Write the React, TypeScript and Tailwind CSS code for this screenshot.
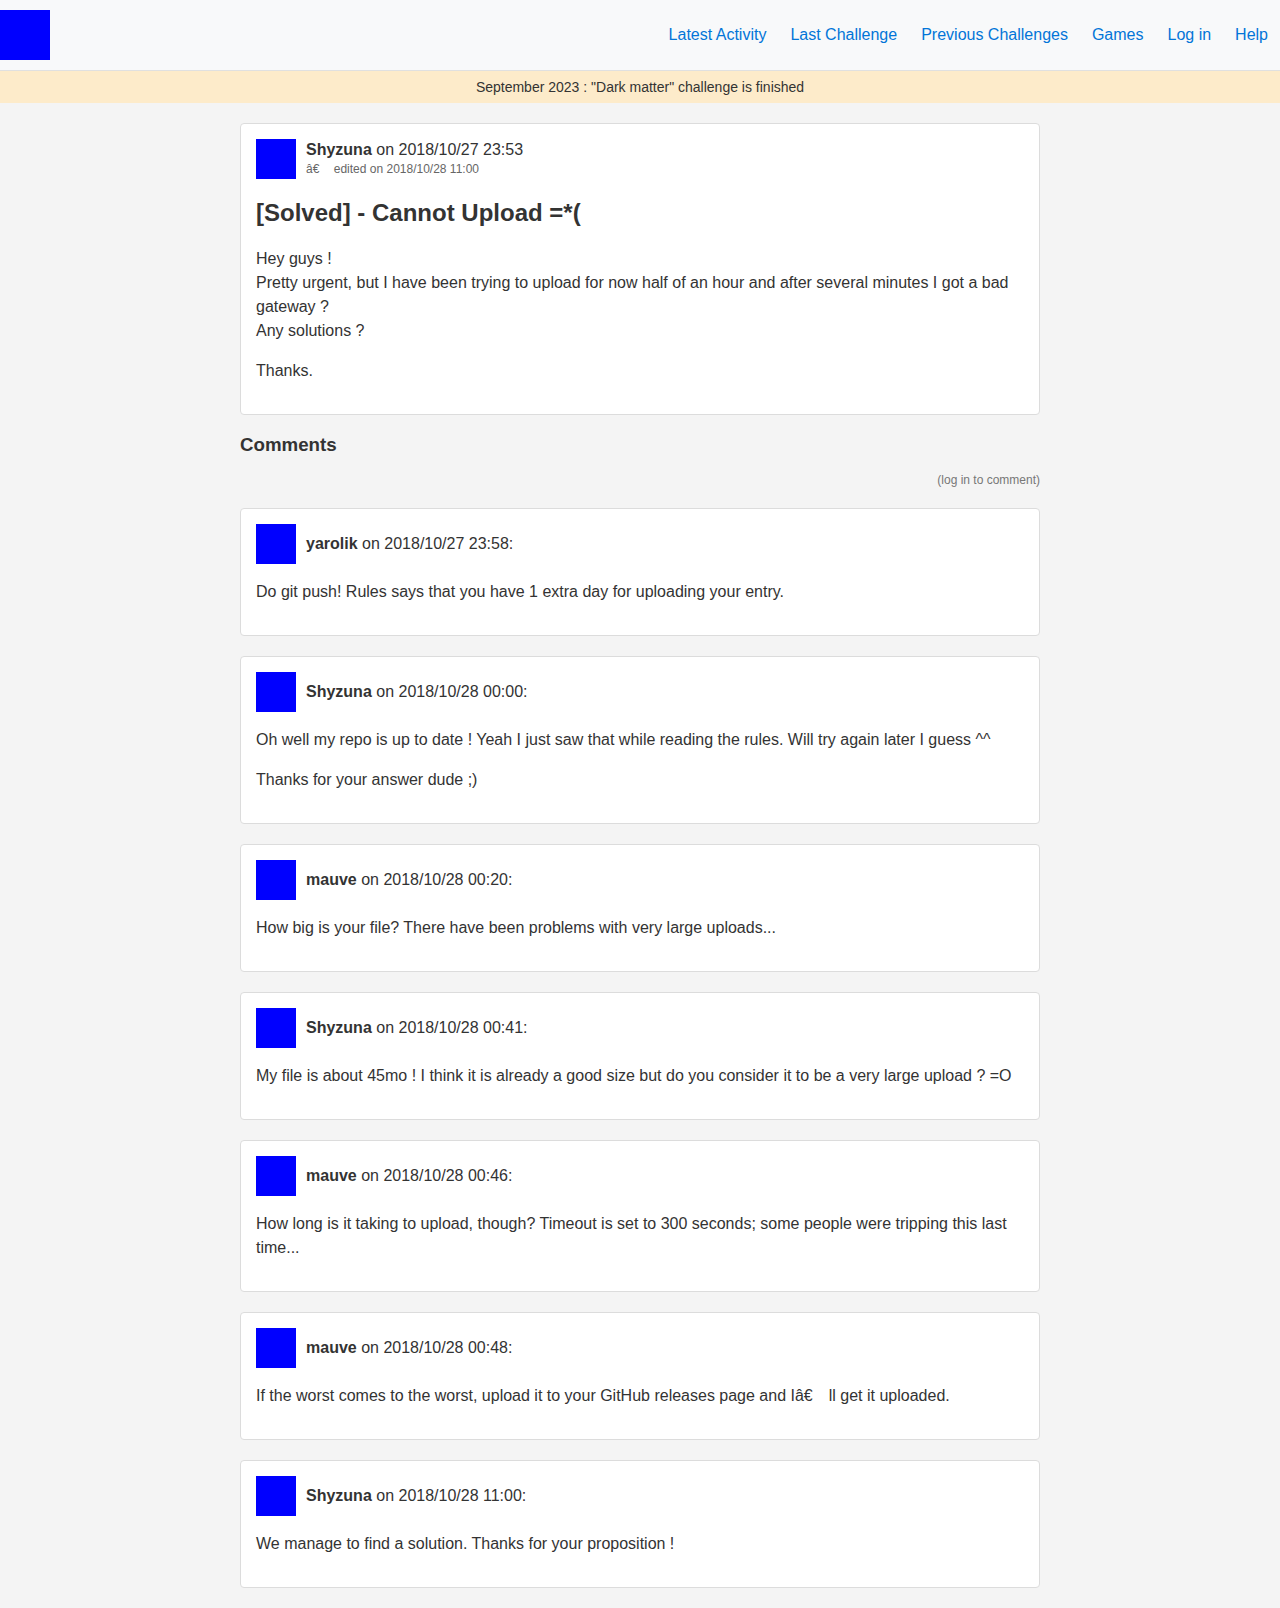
const navLinks = ['Latest Activity', 'Last Challenge', 'Previous Challenges', 'Games', 'Log in', 'Help'];

type Comment = {
  author: string;
  date: string;
  paragraphs: string[];
};

const comments: Comment[] = [
  { author: 'yarolik', date: '2018/10/27 23:58', paragraphs: ['Do git push! Rules says that you have 1 extra day for uploading your entry.'] },
  {
    author: 'Shyzuna',
    date: '2018/10/28 00:00',
    paragraphs: [
      'Oh well my repo is up to date ! Yeah I just saw that while reading the rules. Will try again later I guess ^^',
      'Thanks for your answer dude ;)',
    ],
  },
  { author: 'mauve', date: '2018/10/28 00:20', paragraphs: ['How big is your file? There have been problems with very large uploads...'] },
  {
    author: 'Shyzuna',
    date: '2018/10/28 00:41',
    paragraphs: ['My file is about 45mo ! I think it is already a good size but do you consider it to be a very large upload ? =O'],
  },
  {
    author: 'mauve',
    date: '2018/10/28 00:46',
    paragraphs: ['How long is it taking to upload, though? Timeout is set to 300 seconds; some people were tripping this last time...'],
  },
  {
    author: 'mauve',
    date: '2018/10/28 00:48',
    paragraphs: ['If the worst comes to the worst, upload it to your GitHub releases page and I\u00e2\u20ac\u2003ll get it uploaded.'],
  },
  { author: 'Shyzuna', date: '2018/10/28 11:00', paragraphs: ['We manage to find a solution. Thanks for your proposition !'] },
];

const Avatar = () => <div className="w-10 h-10 shrink-0 bg-[#0000ff]" />;

const CommentCard = ({ comment }: { comment: Comment }) => (
  <div className="bg-white border border-[#dcdcdc] rounded px-[15px] pt-[15px] pb-[15px] mb-5">
    <div className="flex items-center gap-[10px]">
      <Avatar />
      <div className="leading-6">
        <span className="font-bold">{comment.author}</span> on {comment.date}:
      </div>
    </div>
    {comment.paragraphs.map((text, i) => (
      <p key={i} className="mt-4 mb-4 leading-6">
        {text}
      </p>
    ))}
  </div>
);

export default function App() {
  return (
    <div className="min-h-[1608px] bg-[#f4f4f4] text-[#333] text-[16px] font-['Liberation_Sans',Arial,sans-serif]">
      <header className="h-[71px] bg-[#f8f9fa] border-b border-[#e0e0e0] flex items-center justify-between">
        <div className="w-[50px] h-[50px] bg-[#0000ff]" />
        <nav className="flex items-center">
          {navLinks.map((link) => (
            <a key={link} href="#" className="text-[#0275d8] px-3 leading-6">
              {link}
            </a>
          ))}
        </nav>
      </header>

      <div className="bg-[#fdebca] h-[32px] flex items-center justify-center text-[14px]">
        September 2023 : "Dark matter" challenge is finished
      </div>

      <main className="w-[800px] mx-auto pt-5 pb-[1px]">
        <div className="bg-white border border-[#dcdcdc] rounded px-[15px] pt-[15px] pb-[15px]">
          <div className="flex items-start gap-[10px]">
            <Avatar />
            <div>
              <div className="leading-6 -mt-[1px]">
                <span className="font-bold">Shyzuna</span> on 2018/10/27 23:53
              </div>
              <div className="text-[12px] leading-[14px] text-[#666]">
                {'\u00e2\u20ac\u2003\u2009edited on 2018/10/28 11:00'}
              </div>
            </div>
          </div>
          <h1 className="text-[24px] font-bold leading-[29px] mt-[19px] mb-5">[Solved] - Cannot Upload =*(</h1>
          <p className="leading-6 mb-4">
            Hey guys !
            <br />
            Pretty urgent, but I have been trying to upload for now half of an hour and after several minutes I got a bad gateway ?
            <br />
            Any solutions ?
          </p>
          <p className="leading-6 mb-4">Thanks.</p>
        </div>

        <h3 className="text-[18.72px] font-bold leading-7 mt-4">Comments</h3>
        <div className="text-right text-[12px] leading-[18px] text-[#777] mt-[12px] mb-[19px]">(log in to comment)</div>

        {comments.map((c, i) => (
          <CommentCard key={i} comment={c} />
        ))}
      </main>
    </div>
  );
}
